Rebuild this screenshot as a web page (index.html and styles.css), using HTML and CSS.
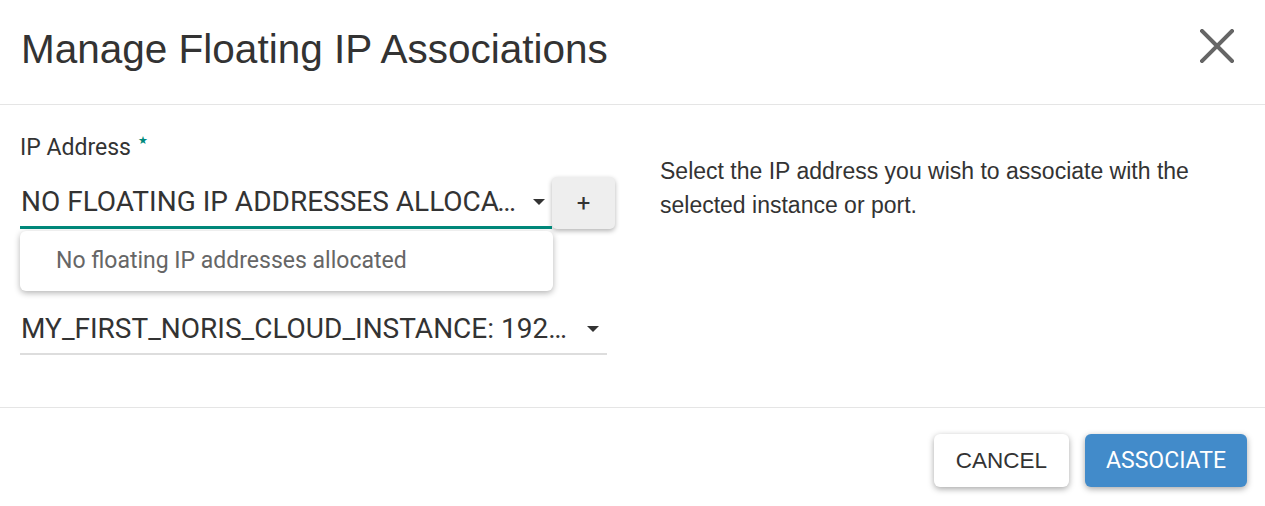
FILE: index.html
```html
<!DOCTYPE html>
<html lang="en">
   <head>
      <meta charset="UTF-8" />
      <title>Manage Floating IP Associations</title>
      <link rel="stylesheet" href="styles.css">
   </head>
   <body>
      <div class="modal">
         <div class="modal-header">
            <h1 class="modal-title">Manage Floating IP Associations</h1>
            <button class="close" type="button" aria-label="Close">
               <svg width="34" height="34" viewBox="0 0 34 34">
                  <path d="M2 2 L32 32 M32 2 L2 32" stroke="#666" stroke-width="4" stroke-linecap="square" fill="none"/>
               </svg>
            </button>
         </div>
         <div class="modal-body">
            <div class="form-col">
               <label class="field-label">IP Address <span class="required">&#9733;</span></label>
               <div class="select-row">
                  <div class="select-wrap">
                     <div class="select active">
                        <span class="select-value">NO FLOATING IP ADDRESSES ALLOCATED</span>
                        <span class="caret"></span>
                     </div>
                     <ul class="dropdown">
                        <li>No floating IP addresses allocated</li>
                     </ul>
                  </div>
                  <button class="btn-add" type="button">+</button>
               </div>
               <div class="select port">
                  <span class="select-value">MY_FIRST_NORIS_CLOUD_INSTANCE: 192.168.0.12</span>
                  <span class="caret"></span>
               </div>
            </div>
            <div class="help-col">
               <p>Select the IP address you wish to associate with the selected instance or port.</p>
            </div>
         </div>
         <div class="modal-footer">
            <button class="btn btn-default" type="button">CANCEL</button>
            <button class="btn btn-primary" type="button">ASSOCIATE</button>
         </div>
      </div>
   </body>
</html>
```

FILE: styles.css
```css
body {
margin: 0;
background: #fff;
color: #333;
font-family: Roboto, "Liberation Sans", sans-serif;
}
.modal {
width: 1265px;
height: 506px;
display: flex;
flex-direction: column;
}
.modal-header {
display: flex;
align-items: flex-start;
justify-content: space-between;
height: 75px;
padding: 29px 31px 0 21px;
border-bottom: 1px solid #e5e5e5;
}
.modal-title {
margin: 0;
font-family: "Liberation Sans", Arial, sans-serif;
font-weight: 400;
font-size: 40.5px;
color: #333;
line-height: 1;
}
.close {
background: none;
border: none;
padding: 0;
width: 34px;
height: 34px;
cursor: pointer;
}
.close svg {
display: block;
}
.modal-body {
display: flex;
gap: 53px;
height: 302px;
padding: 0 20px;
border-bottom: 1px solid #e5e5e5;
}
.form-col {
width: 587px;
flex-shrink: 0;
padding-top: 30px;
}
.field-label {
display: block;
height: 26px;
font-size: 23px;
line-height: 26px;
color: #333;
}
/* little star marking a required field */
.required {
position: relative;
top: -11px;
color: #00897b;
font-size: 11px;
margin-left: 1px;
}
.select-row {
display: flex;
align-items: flex-start;
margin-top: 16px;
}
.select-wrap {
position: relative;
width: 532px;
flex-shrink: 0;
}
.select {
display: flex;
align-items: center;
height: 49px;
font-size: 28px;
color: #333;
border-bottom: 2px solid #ddd;
}
.select.active {
border-bottom: 3px solid #00897b;
}
.select-value {
flex: 1;
overflow: hidden;
white-space: nowrap;
text-overflow: ellipsis;
padding-left: 1px;
}
.caret {
width: 0;
height: 0;
border-left: 6px solid transparent;
border-right: 6px solid transparent;
border-top: 6px solid #333;
margin: 0 7px 0 12px;
}
.dropdown {
position: absolute;
left: 0;
top: 54px;
width: 533px;
margin: 0;
padding: 0;
list-style: none;
background: #fff;
border-radius: 6px;
box-shadow: 0 2px 6px rgba(0, 0, 0, 0.3);
z-index: 2;
}
.dropdown li {
height: 60px;
line-height: 60px;
padding-left: 36px;
font-size: 23px;
color: #666;
}
.btn-add {
width: 63px;
height: 52px;
flex-shrink: 0;
border: none;
border-radius: 5px;
background: #eee;
color: #333;
font-family: Roboto, sans-serif;
font-size: 24px;
box-shadow: 0 2px 5px rgba(0, 0, 0, 0.3);
cursor: pointer;
}
.select.port {
margin-top: 75px;
}
.select.port .select-value {
padding-right: 5px;
}
.select.port .caret {
margin-right: 8px;
}
.help-col {
flex: 1;
padding-top: 49px;
}
.help-col p {
margin: 0;
width: 580px;
font-family: "Liberation Sans", Arial, sans-serif;
font-size: 23px;
line-height: 34px;
color: #333;
}
.modal-footer {
display: flex;
justify-content: flex-end;
align-items: flex-start;
gap: 16px;
padding: 26px 18px 0 0;
}
.btn {
height: 53px;
border: none;
border-radius: 6px;
padding: 0;
box-shadow: 0 2px 6px rgba(0, 0, 0, 0.35);
cursor: pointer;
}
.btn-default {
background: #fff;
color: #333;
width: 135px;
font-family: "Liberation Sans", Arial, sans-serif;
font-size: 22.5px;
}
.btn-primary {
background: #428bca;
color: #fff;
width: 162px;
font-family: Roboto, sans-serif;
font-size: 23px;
}
```
